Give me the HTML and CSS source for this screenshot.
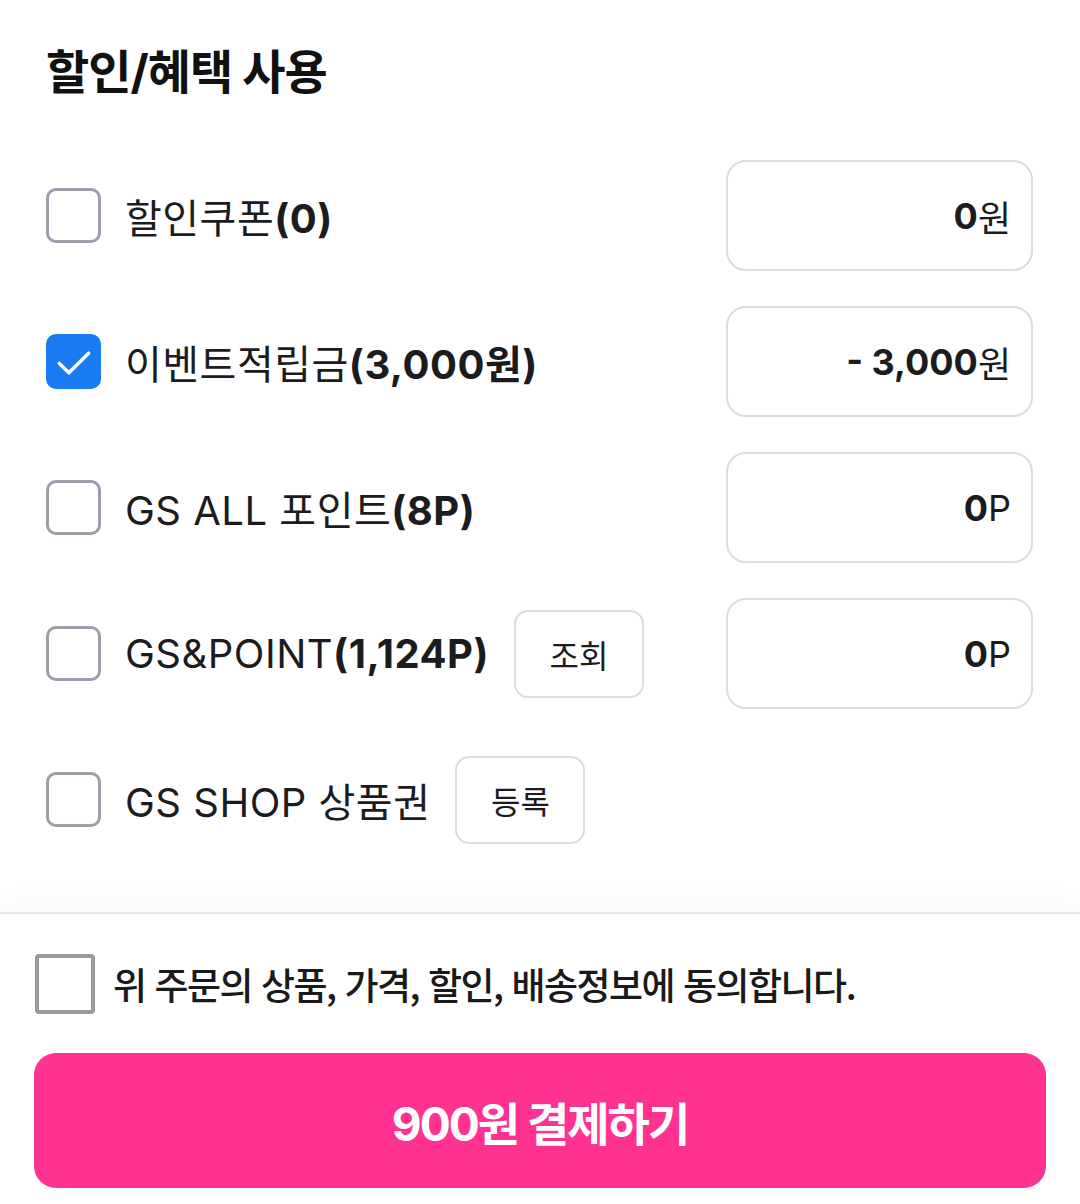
FILE: index.html
```html
<!DOCTYPE html>
<html lang="ko">
<head>
    <meta charset="UTF-8">
    <meta name="viewport" content="width=device-width, initial-scale=1.0">
    <title>할인/혜택 사용</title>
    <link rel="stylesheet" href="styles.css">
</head>
<body>
    <div class="benefit">
        <h2 class="title">할인/혜택 사용</h2>
        <div class="list">
            <div class="row">
                <div class="left">
                    <span class="check"></span>
                    <span class="label">할인쿠폰<b>(0)</b></span>
                </div>
                <div class="amount"><b>0</b>원</div>
            </div>
            <div class="row">
                <div class="left">
                    <span class="check on">
                        <svg viewBox="0 0 24 24" width="44" height="44"><path d="M4 12.8l5.2 5L20 7.2" fill="none" stroke="#fff" stroke-width="1.9" stroke-linecap="round" stroke-linejoin="round"/></svg>
                    </span>
                    <span class="label">이벤트적립금<b>(3,000원)</b></span>
                </div>
                <div class="amount"><b>- 3,000</b>원</div>
            </div>
            <div class="row">
                <div class="left">
                    <span class="check"></span>
                    <span class="label">GS ALL 포인트<b>(8P)</b></span>
                </div>
                <div class="amount"><b>0</b>P</div>
            </div>
            <div class="row">
                <div class="left">
                    <span class="check"></span>
                    <span class="label">GS&amp;POINT<b>(1,124P)</b></span>
                    <button class="small-btn">조회</button>
                </div>
                <div class="amount"><b>0</b>P</div>
            </div>
            <div class="row">
                <div class="left">
                    <span class="check"></span>
                    <span class="label">GS SHOP 상품권</span>
                    <button class="small-btn">등록</button>
                </div>
            </div>
        </div>
    </div>
    <div class="footer">
        <div class="agree">
            <span class="agree-check"></span>
            <span class="agree-text">위 주문의 상품, 가격, 할인, 배송정보에 동의합니다.</span>
        </div>
        <button class="pay">900원 결제하기</button>
    </div>
</body>
</html>
```

FILE: styles.css
```css
body {
    margin: 0;
    background: #ffffff;
    color: #1c1c1e;
    font-family: Inter, "Noto Sans CJK KR", sans-serif;
}
.benefit {
    padding: 44px 47px 57px 46px;
}
.title {
    margin: 0 0 61px;
    font-size: 47px;
    line-height: 55px;
    font-weight: 700;
    letter-spacing: -1px;
    color: #111111;
}
.list {
    display: flex;
    flex-direction: column;
    gap: 35px;
}
.row {
    display: flex;
    align-items: center;
    justify-content: space-between;
    height: 111px;
}
.left {
    display: flex;
    align-items: center;
}
.check {
    box-sizing: border-box;
    width: 55px;
    height: 55px;
    border: 3px solid #9d9dab;
    border-radius: 10px;
    display: flex;
    align-items: center;
    justify-content: center;
}
.check.on {
    background: #1a7cf5;
    border-color: #1a7cf5;
}
.label {
    margin-left: 24px;
    font-size: 40px;
    letter-spacing: 0.5px;
    color: #1c1c1e;
}
.label b {
    font-weight: 700;
}
.small-btn {
    margin-left: 25px;
    width: 130px;
    height: 88px;
    border: 2px solid #dcdcdf;
    border-radius: 14px;
    background: #ffffff;
    font-family: "Noto Sans CJK KR", sans-serif;
    font-size: 32px;
    color: #1c1c1e;
    padding: 0;
}
.amount {
    box-sizing: border-box;
    width: 307px;
    height: 111px;
    border: 2px solid #dcdce0;
    border-radius: 20px;
    display: flex;
    align-items: center;
    justify-content: flex-end;
    padding-right: 20px;
    font-size: 36px;
    color: #1c1c1e;
}
.amount b {
    font-weight: 700;
}
.footer {
    border-top: 2px solid #e6e6e6;
    box-shadow: 0 -14px 24px rgba(0, 0, 0, 0.025);
    padding: 40px 34px 17px;
}
.agree {
    display: flex;
    align-items: center;
    padding-left: 1px;
}
.agree-check {
    box-sizing: border-box;
    width: 60px;
    height: 60px;
    border: 4px solid #9a9a9a;
    border-radius: 4px;
}
.agree-text {
    margin-left: 18px;
    font-family: "Noto Sans CJK KR", sans-serif;
    font-size: 37px;
    font-weight: 500;
    letter-spacing: -1.5px;
    color: #1a1a1a;
}
.pay {
    display: block;
    margin-top: 39px;
    width: 100%;
    height: 135px;
    border: none;
    border-radius: 22px;
    background: #ff3291;
    color: #ffffff;
    font-family: Inter, "Noto Sans CJK KR", sans-serif;
    font-size: 46px;
    font-weight: 700;
    letter-spacing: -2px;
}
```
